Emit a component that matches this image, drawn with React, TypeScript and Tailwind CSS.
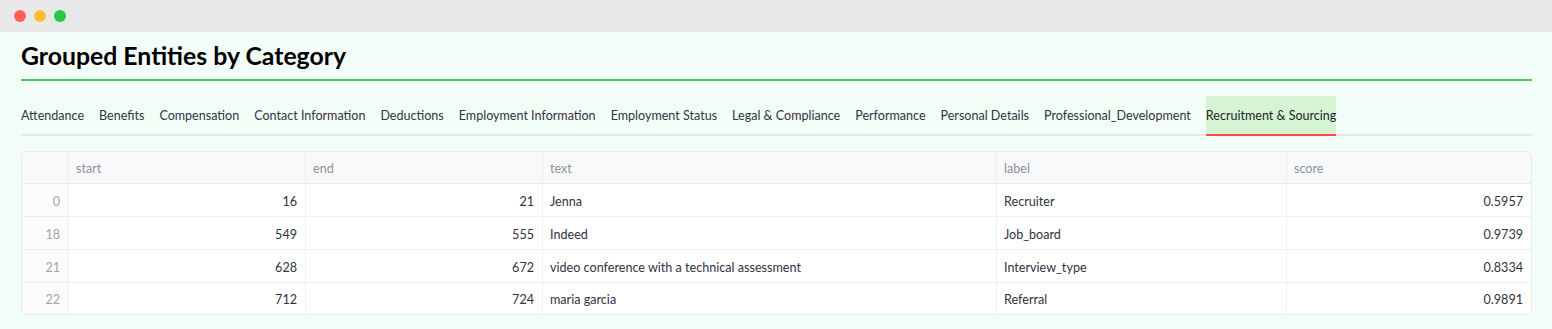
import React, { useState } from 'react';

const tabs = [
  'Attendance',
  'Benefits',
  'Compensation',
  'Contact Information',
  'Deductions',
  'Employment Information',
  'Employment Status',
  'Legal & Compliance',
  'Performance',
  'Personal Details',
  'Professional_Development',
  'Recruitment & Sourcing',
];

const rows = [
  { idx: 0, start: 16, end: 21, text: 'Jenna', label: 'Recruiter', score: '0.5957' },
  { idx: 18, start: 549, end: 555, text: 'Indeed', label: 'Job_board', score: '0.9739' },
  { idx: 21, start: 628, end: 672, text: 'video conference with a technical assessment', label: 'Interview_type', score: '0.8334' },
  { idx: 22, start: 712, end: 724, text: 'maria garcia', label: 'Referral', score: '0.9891' },
];

const gridCols = 'grid grid-cols-[47px_237px_237px_454px_290px_1fr]';

export default function App() {
  const [active, setActive] = useState('Recruitment & Sourcing');

  return (
    <div className="w-[1552px] h-[329px] bg-[#f3fdf8] font-['Lato',sans-serif] text-[#31333f] overflow-hidden">
      <div className="h-[32px] bg-[#e8e8e8] flex items-center gap-[8px] pl-[14px]">
        <span className="w-[12px] h-[12px] rounded-full bg-[#ff5f57]" />
        <span className="w-[12px] h-[12px] rounded-full bg-[#febc2e]" />
        <span className="w-[12px] h-[12px] rounded-full bg-[#28c840]" />
      </div>

      <div className="pl-[21px] pr-[20px]">
        <h1 className="pt-[8px] pb-[7px] text-[24.8px] leading-[32px] font-bold text-black border-b-2 border-[#45cc68]">
          Grouped Entities by Category
        </h1>

        <div className="mt-[15px] flex gap-[15px] border-b-2 border-[#e3e8e5] h-[40px]">
          {tabs.map((t) => (
            <button
              key={t}
              onClick={() => setActive(t)}
              className={`text-[12.55px] leading-[38px] pt-[1px] whitespace-nowrap -mb-[2px] border-b-2 ${
                active === t ? 'bg-[#d4f4d4] border-[#ff4b4b] text-[#1f1f26]' : 'border-transparent text-[#31333f]'
              }`}
            >
              {t}
            </button>
          ))}
        </div>

        <div className="mt-[15px] rounded-[6px] border border-[#e6e9ee] bg-white overflow-hidden text-[12.6px]">
          <div className={`${gridCols} h-[32px] bg-[#f8f9fb] text-[#8e9099] border-b border-[#e6e9ee]`}>
            <div className="border-r border-[#eceef2]" />
            {['start', 'end', 'text', 'label', 'score'].map((h, i) => (
              <div key={h} className={`flex items-center pt-[4px] px-[7px] ${i < 4 ? 'border-r border-[#eceef2]' : ''}`}>
                {h}
              </div>
            ))}
          </div>
          {rows.map((r, ri) => (
            <div
              key={r.idx}
              className={`${gridCols} ${ri < rows.length - 1 ? 'h-[33px] border-b border-[#eceef2]' : 'h-[31px]'}`}
            >
              <div className="flex items-center justify-end pt-[4px] pr-[8px] text-[#a3a5ad] bg-[#fbfbfc] border-r border-[#eceef2]">{r.idx}</div>
              <div className="flex items-center justify-end pt-[4px] pr-[8px] border-r border-[#eceef2]">{r.start}</div>
              <div className="flex items-center justify-end pt-[4px] pr-[8px] border-r border-[#eceef2]">{r.end}</div>
              <div className="flex items-center pt-[4px] px-[7px] border-r border-[#eceef2]">{r.text}</div>
              <div className="flex items-center pt-[4px] px-[7px] border-r border-[#eceef2]">{r.label}</div>
              <div className="flex items-center justify-end pt-[4px] pr-[8px]">{r.score}</div>
            </div>
          ))}
        </div>
      </div>
    </div>
  );
}
